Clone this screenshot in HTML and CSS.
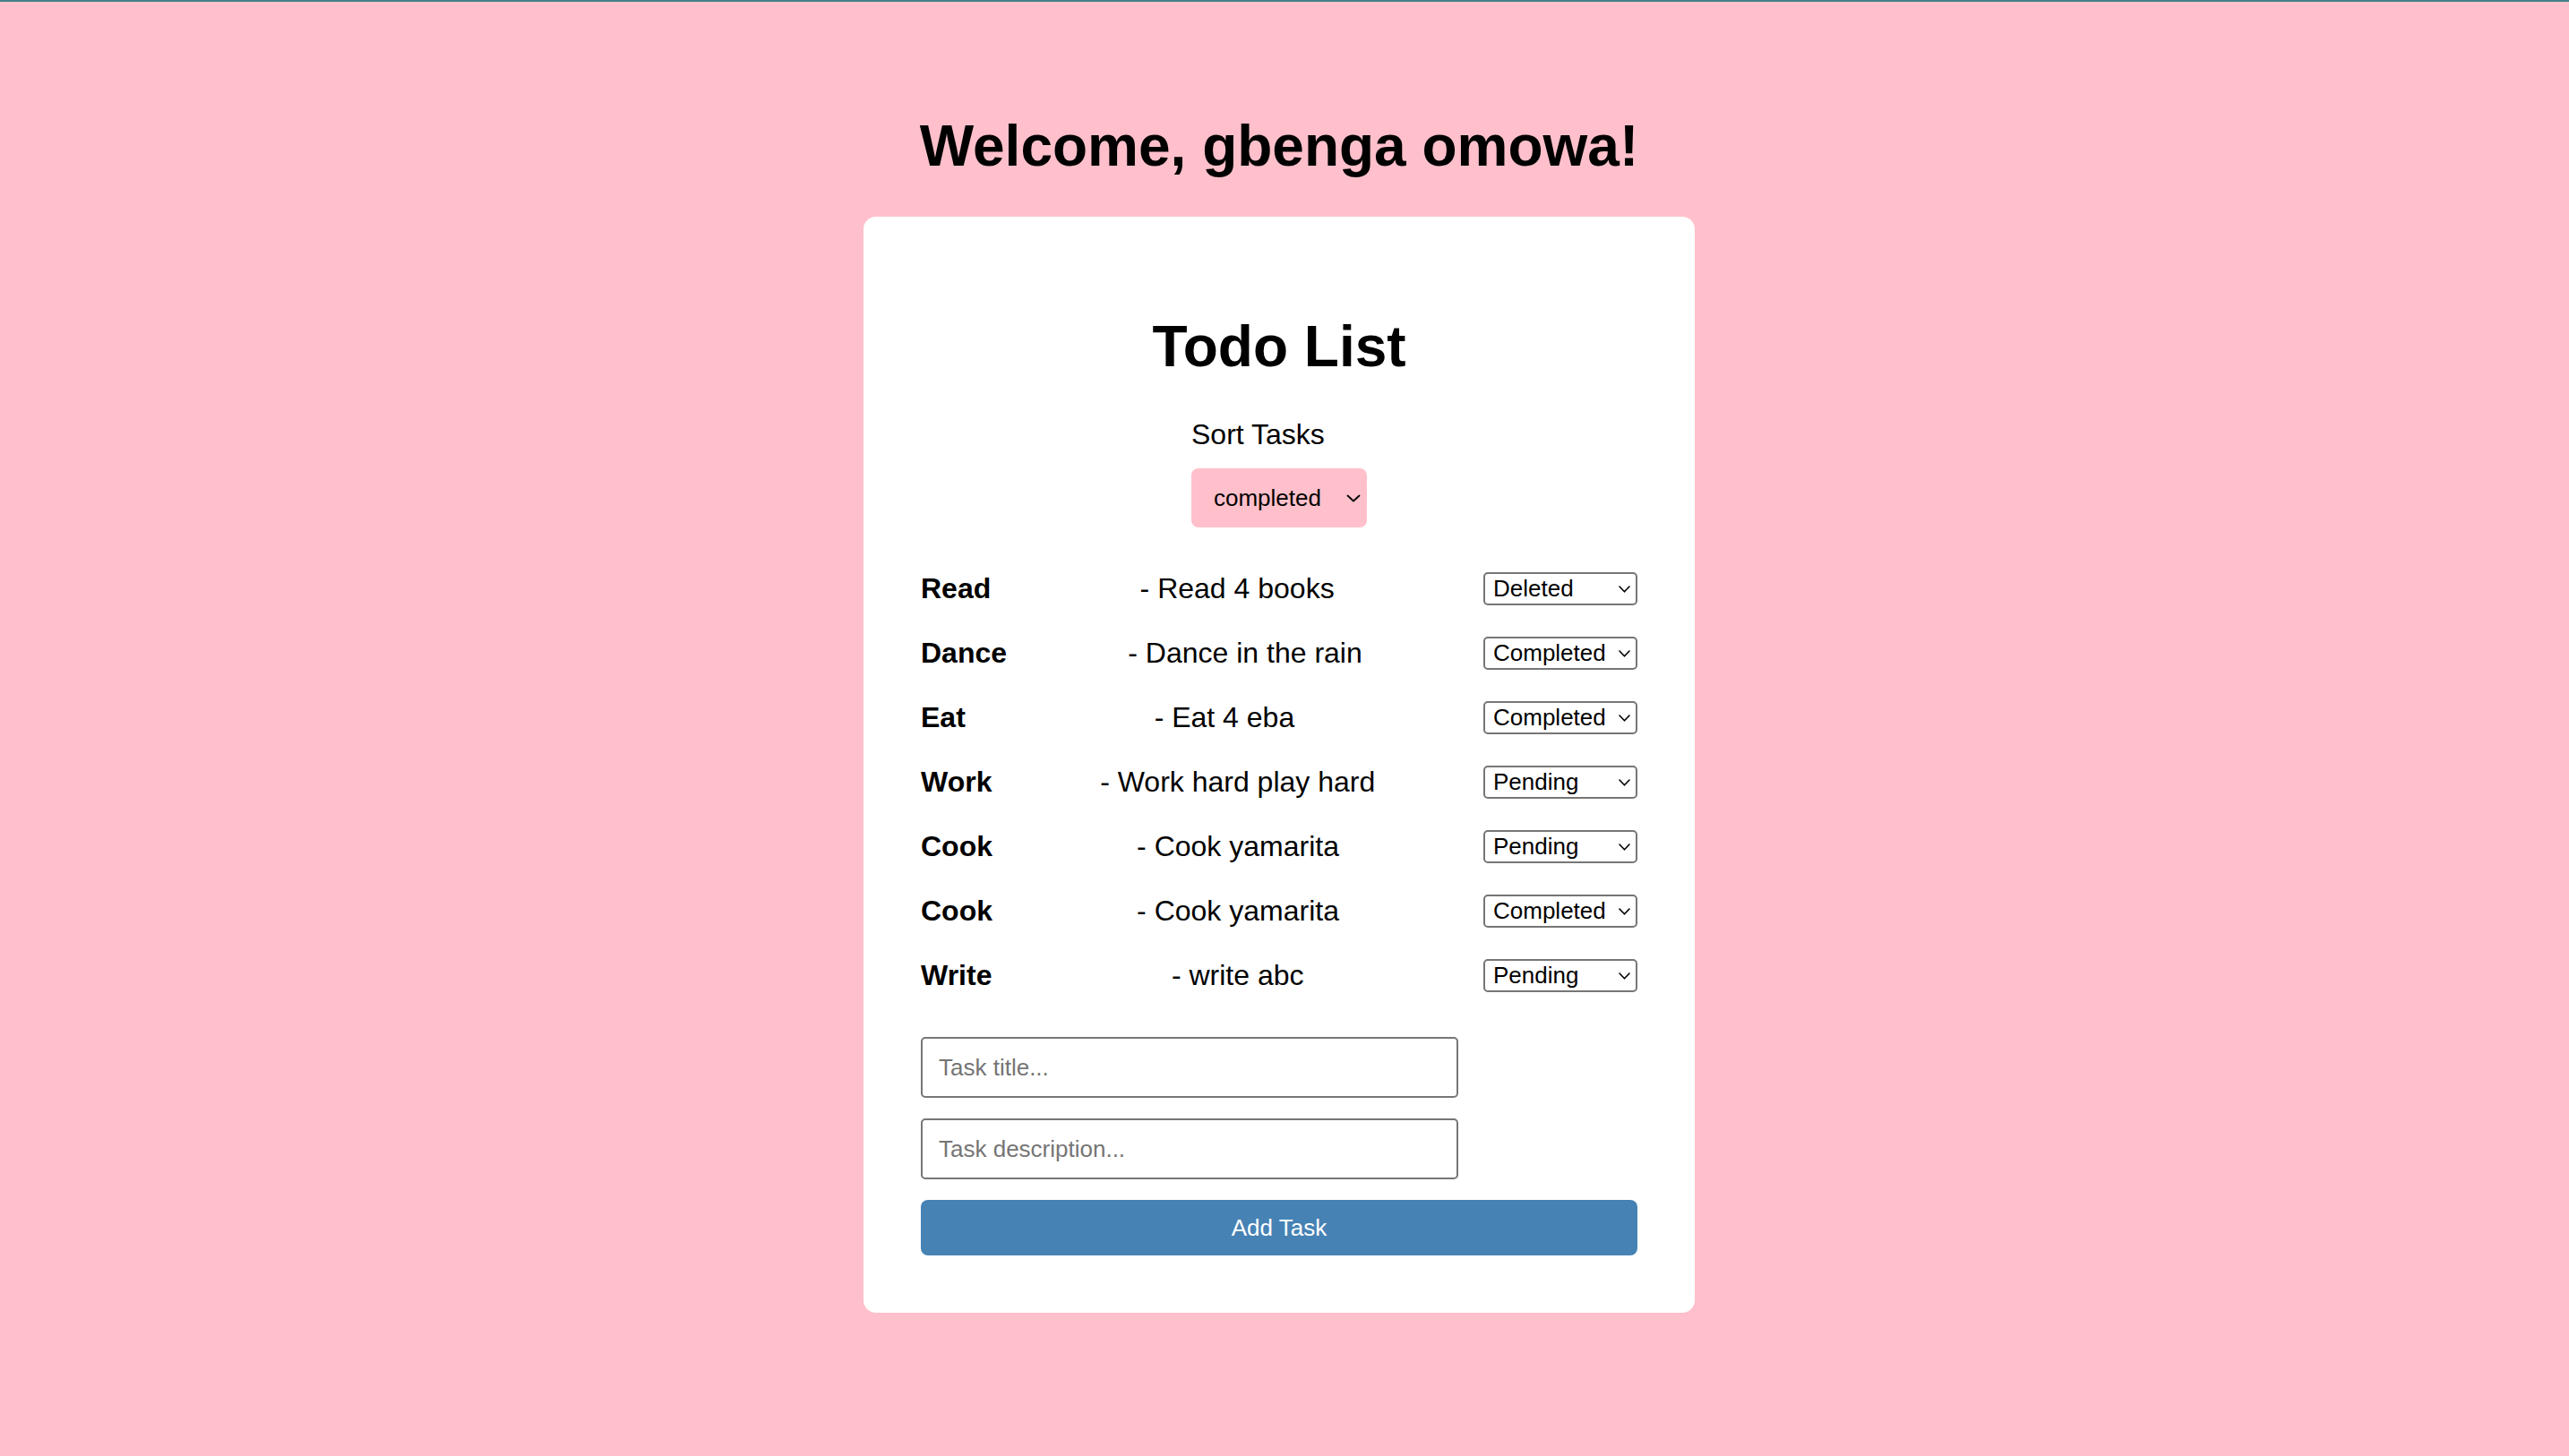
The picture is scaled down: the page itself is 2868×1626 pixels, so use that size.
FILE: index.html
```html
<!DOCTYPE html>
<html lang="en">
<head>
<meta charset="utf-8">
<title>Todo List</title>
<link rel="stylesheet" href="styles.css">
</head>
<body>
<div class="topbar"></div>
<main class="page">
  <h1 class="welcome">Welcome, gbenga omowa!</h1>
  <section class="card">
    <h2 class="card-title">Todo List</h2>
    <div class="sort">
      <label class="sort-label" for="sort">Sort Tasks</label>
      <div class="select-wrap">
        <select id="sort" class="sort-select"><option>completed</option><option>pending</option><option>deleted</option></select>
        <svg class="chev chev-sort" width="16" height="9" viewBox="0 0 16 9"><path d="M1.5 1.5 L8 7.5 L14.5 1.5" fill="none" stroke="#000" stroke-width="1.8" stroke-linecap="round" stroke-linejoin="round"/></svg>
      </div>
    </div>
    <ul class="tasks">
      <li class="task"><span class="task-title">Read</span><span class="task-desc">- Read 4 books</span><div class="select-wrap"><select class="status"><option>Deleted</option><option>Completed</option><option>Pending</option></select><svg class="chev chev-row" width="13" height="8" viewBox="0 0 13 8"><path d="M1 1 L6.5 6.8 L12 1" fill="none" stroke="#000" stroke-width="1.6" stroke-linecap="round" stroke-linejoin="round"/></svg></div></li>
      <li class="task"><span class="task-title">Dance</span><span class="task-desc">- Dance in the rain</span><div class="select-wrap"><select class="status"><option>Completed</option><option>Pending</option><option>Deleted</option></select><svg class="chev chev-row" width="13" height="8" viewBox="0 0 13 8"><path d="M1 1 L6.5 6.8 L12 1" fill="none" stroke="#000" stroke-width="1.6" stroke-linecap="round" stroke-linejoin="round"/></svg></div></li>
      <li class="task"><span class="task-title">Eat</span><span class="task-desc">- Eat 4 eba</span><div class="select-wrap"><select class="status"><option>Completed</option><option>Pending</option><option>Deleted</option></select><svg class="chev chev-row" width="13" height="8" viewBox="0 0 13 8"><path d="M1 1 L6.5 6.8 L12 1" fill="none" stroke="#000" stroke-width="1.6" stroke-linecap="round" stroke-linejoin="round"/></svg></div></li>
      <li class="task"><span class="task-title">Work</span><span class="task-desc">- Work hard play hard</span><div class="select-wrap"><select class="status"><option>Pending</option><option>Completed</option><option>Deleted</option></select><svg class="chev chev-row" width="13" height="8" viewBox="0 0 13 8"><path d="M1 1 L6.5 6.8 L12 1" fill="none" stroke="#000" stroke-width="1.6" stroke-linecap="round" stroke-linejoin="round"/></svg></div></li>
      <li class="task"><span class="task-title">Cook</span><span class="task-desc">- Cook yamarita</span><div class="select-wrap"><select class="status"><option>Pending</option><option>Completed</option><option>Deleted</option></select><svg class="chev chev-row" width="13" height="8" viewBox="0 0 13 8"><path d="M1 1 L6.5 6.8 L12 1" fill="none" stroke="#000" stroke-width="1.6" stroke-linecap="round" stroke-linejoin="round"/></svg></div></li>
      <li class="task"><span class="task-title">Cook</span><span class="task-desc">- Cook yamarita</span><div class="select-wrap"><select class="status"><option>Completed</option><option>Pending</option><option>Deleted</option></select><svg class="chev chev-row" width="13" height="8" viewBox="0 0 13 8"><path d="M1 1 L6.5 6.8 L12 1" fill="none" stroke="#000" stroke-width="1.6" stroke-linecap="round" stroke-linejoin="round"/></svg></div></li>
      <li class="task"><span class="task-title">Write</span><span class="task-desc">- write abc</span><div class="select-wrap"><select class="status"><option>Pending</option><option>Completed</option><option>Deleted</option></select><svg class="chev chev-row" width="13" height="8" viewBox="0 0 13 8"><path d="M1 1 L6.5 6.8 L12 1" fill="none" stroke="#000" stroke-width="1.6" stroke-linecap="round" stroke-linejoin="round"/></svg></div></li>
    </ul>
    <form class="add-form">
      <input class="field" type="text" placeholder="Task title...">
      <input class="field" type="text" placeholder="Task description...">
      <button class="add-btn" type="button">Add Task</button>
    </form>
  </section>
</main>
</body>
</html>
```

FILE: styles.css
```css
* { box-sizing: border-box; }

html, body {
  margin: 0;
  padding: 0;
}

body {
  background: #ffc0cb;
  font-family: "Liberation Sans", Arial, Helvetica, sans-serif;
  font-size: 32px;
  color: #000;
  min-height: 1626px;
}

.topbar {
  height: 2px;
  background: #40808a;
}

.page {
  padding-right: 12px;
  display: flex;
  flex-direction: column;
  align-items: center;
}

.welcome {
  font-size: 64px;
  line-height: 74px;
  font-weight: 700;
  margin: 124px 0 42px;
  text-align: center;
}

.card {
  width: 928px;
  background: #fff;
  border-radius: 14px;
  padding: 64px;
}

.card-title {
  font-size: 64px;
  line-height: 74px;
  font-weight: 700;
  text-align: center;
  margin: 44px 0 43px;
}

.sort {
  width: 196px;
  margin: 0 auto;
  display: flex;
  flex-direction: column;
  align-items: flex-start;
}

.sort-label {
  line-height: 37px;
  font-size: 32px;
  margin-bottom: 19px;
}

.select-wrap {
  position: relative;
  display: block;
}

.chev {
  position: absolute;
  top: 50%;
  pointer-events: none;
}

.chev-sort {
  right: 7px;
  margin-top: -4px;
}

.chev-row {
  right: 8px;
  margin-top: -3px;
}

.sort-select {
  appearance: none;
  -webkit-appearance: none;
  width: 196px;
  height: 66px;
  padding: 0 0 0 25px;
  border: none;
  border-radius: 8px;
  background: #ffc0cb;
  font-family: "Liberation Sans", Arial, Helvetica, sans-serif;
  font-size: 26px;
  color: #000;
}

.tasks {
  list-style: none;
  margin: 32px 0 33px;
  padding: 0;
}

.task {
  display: flex;
  justify-content: space-between;
  align-items: center;
  padding: 17px 0;
  line-height: 38px;
}

.task-title {
  font-weight: 700;
}

.status {
  appearance: none;
  -webkit-appearance: none;
  width: 172px;
  height: 37px;
  padding: 0 0 0 9px;
  border: 2px solid #767676;
  border-radius: 5px;
  background: #fff;
  font-family: "Liberation Sans", Arial, Helvetica, sans-serif;
  font-size: 26px;
  color: #000;
  display: block;
}

.add-form {
  display: flex;
  flex-direction: column;
  align-items: flex-start;
  gap: 23px;
}

.field {
  width: 600px;
  height: 68px;
  padding: 0 18px;
  border: 2px solid #767676;
  border-radius: 5px;
  font-family: "Liberation Sans", Arial, Helvetica, sans-serif;
  font-size: 26px;
  color: #000;
  background: #fff;
}

.field::placeholder {
  color: #757575;
}

.add-btn {
  width: 100%;
  height: 62px;
  border: none;
  border-radius: 8px;
  background: #4682b4;
  color: #fff;
  font-family: "Liberation Sans", Arial, Helvetica, sans-serif;
  font-size: 26px;
}
```
